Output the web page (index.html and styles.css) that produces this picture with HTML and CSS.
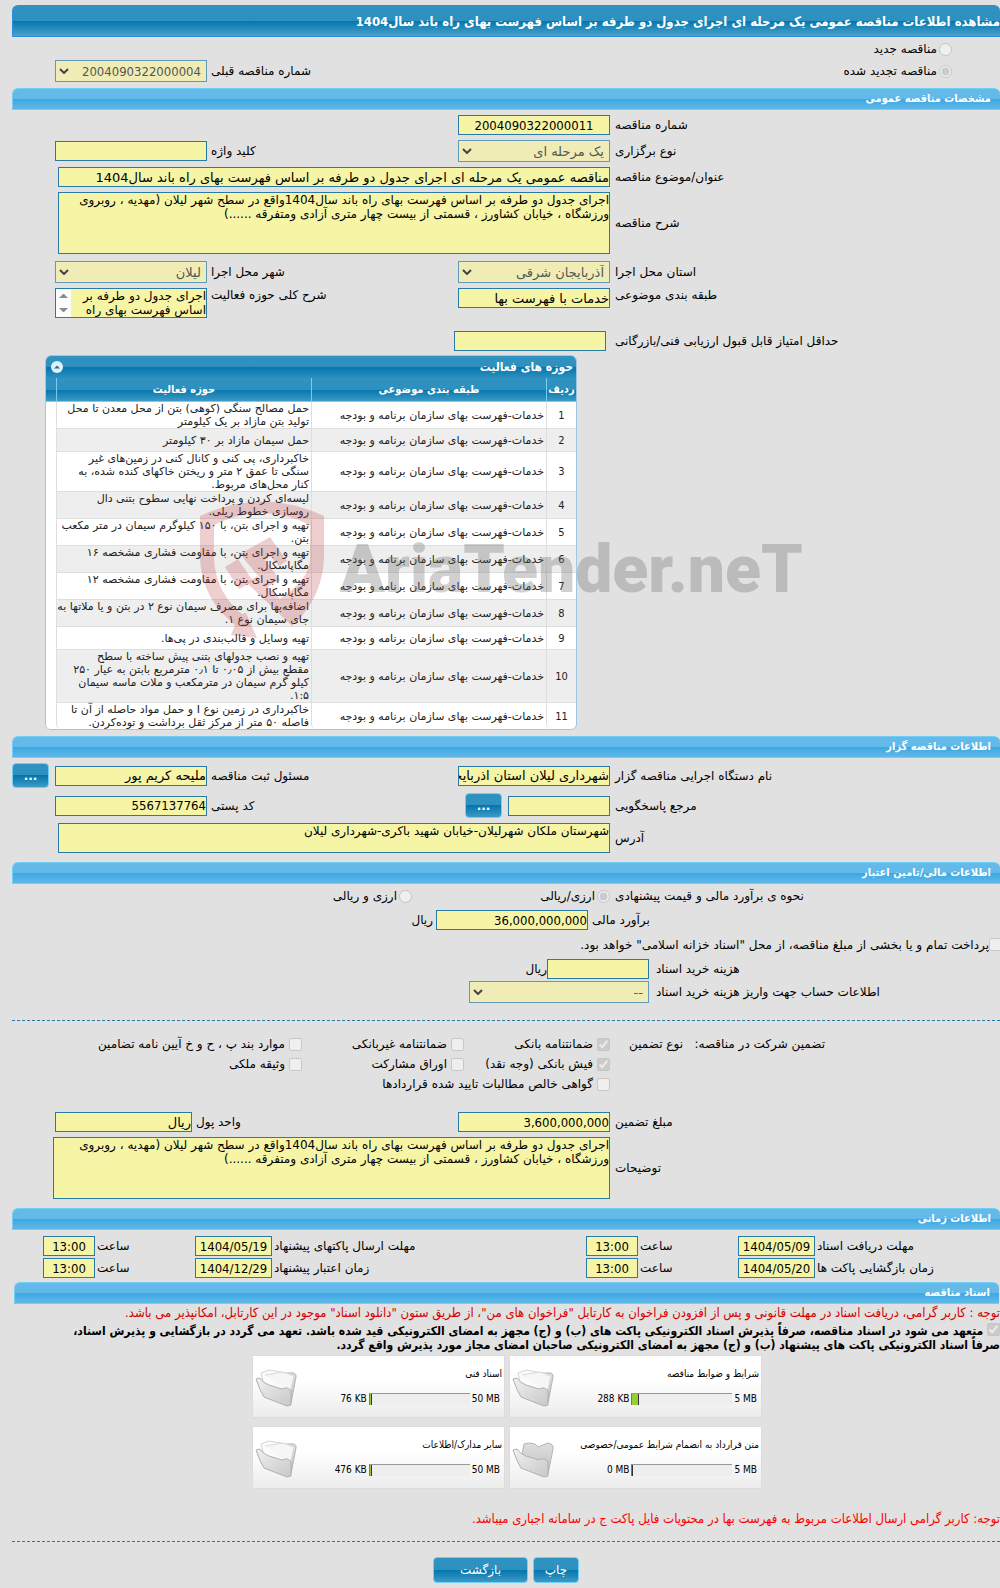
FILE: index.html
```html
<!DOCTYPE html>
<html lang="fa" dir="rtl">
<head>
    <meta charset="UTF-8">
    <meta name="viewport" content="width=device-width, initial-scale=1.0">
    <title>مشاهده اطلاعات مناقصه عمومی</title>
    <link rel="stylesheet" href="styles.css">
</head>
<body>
    <h1 class="page-title">مشاهده اطلاعات مناقصه عمومی یک مرحله ای اجرای جدول دو طرفه بر اساس فهرست بهای راه باند سال1404</h1>

    <form class="tender-form">
        <div class="row choice-row">
            <input type="radio" id="newTender" name="tenderKind" disabled>
            <label for="newTender">مناقصه جدید</label>
        </div>
        <div class="row choice-row">
            <input type="radio" id="renewedTender" name="tenderKind" checked disabled>
            <label for="renewedTender">مناقصه تجدید شده</label>
            <label class="label-second" for="previousNumber">شماره مناقصه قبلی</label>
            <select class="field field-end number" id="previousNumber" disabled><option>2004090322000004</option></select>
        </div>

        <h2 class="section-title">مشخصات مناقصه عمومی</h2>
        <div class="section">
            <div class="row">
                <label class="label-main" for="tenderNumber">شماره مناقصه</label>
                <input class="field number center" type="text" id="tenderNumber" value="2004090322000011" readonly>
            </div>
            <div class="row">
                <label class="label-main" for="tenderType">نوع برگزاری</label>
                <select class="field" id="tenderType" disabled><option>یک مرحله ای</option></select>
                <label class="label-second" for="keyword">کلید واژه</label>
                <input class="field field-end" type="text" id="keyword" readonly>
            </div>
            <div class="row">
                <label class="label-main" for="subject">عنوان/موضوع مناقصه</label>
                <input class="field wide" type="text" id="subject" value="مناقصه عمومی یک مرحله ای اجرای جدول دو طرفه بر اساس فهرست بهای راه باند سال1404" readonly>
            </div>
            <div class="row">
                <label class="label-main" for="description">شرح مناقصه</label>
                <textarea class="field wide tall" id="description" readonly>اجرای جدول دو طرفه بر اساس فهرست بهای راه باند سال1404واقع در سطح شهر لیلان (مهدیه ، روبروی
ورزشگاه ، خیابان کشاورز ، قسمتی از بیست چهار متری آزادی ومتفرقه ......)</textarea>
            </div>
            <div class="row place-row">
                <label class="label-main" for="province">استان محل اجرا</label>
                <select class="field" id="province" disabled><option>آذربایجان شرقی</option></select>
                <label class="label-second" for="city">شهر محل اجرا</label>
                <select class="field field-end" id="city" disabled><option>لیلان</option></select>
            </div>
            <div class="row top">
                <label class="label-main" for="category">طبقه بندی موضوعی</label>
                <input class="field" type="text" id="category" value="خدمات با فهرست بها" readonly>
                <label class="label-second" for="activitySummary">شرح کلی حوزه فعالیت</label>
                <textarea class="field field-end short scrolling" id="activitySummary" readonly>اجرای جدول دو طرفه بر
اساس فهرست بهای راه
باند سال1404</textarea>
                <span class="spinner"><svg viewBox="0 0 15 28" width="15" height="28"><path d="M3 9 L7 5 L8 5 L12 9Z M3 19 L7 23 L8 23 L12 19Z"/></svg></span>
            </div>
            <div class="row score-row">
                <label class="label-main" for="minScore">حداقل امتیاز قابل قبول ارزیابی فنی/بازرگانی</label>
                <input class="field" type="text" id="minScore" readonly>
            </div>
        </div>

        <div class="panel">
            <div class="panel-title">
                <span>حوزه های فعالیت</span>
                <button type="button" class="collapse" aria-label="بستن">
                    <svg viewBox="0 0 12 12" width="12" height="12"><circle cx="6" cy="6" r="6" fill="#dff0fa"/><path d="M3 7.5 L6 4.5 L9 7.5Z" fill="#1f6f9e"/></svg>
                </button>
            </div>
            <table class="activities">
                <thead>
                    <tr><th class="col-index">ردیف</th><th class="col-category">طبقه بندی موضوعی</th><th class="col-activity">حوزه فعالیت</th><th class="col-blank"></th></tr>
                </thead>
                <tbody>
                    <tr><td>1</td><td>خدمات-فهرست بهای سازمان برنامه و بودجه</td><td>حمل مصالح سنگی (کوهی) بتن از محل معدن تا محل<br>تولید بتن مازاد بر یک کیلومتر</td><td></td></tr>
                    <tr><td>2</td><td>خدمات-فهرست بهای سازمان برنامه و بودجه</td><td>حمل سیمان مازاد بر ۳۰ کیلومتر</td><td></td></tr>
                    <tr><td>3</td><td>خدمات-فهرست بهای سازمان برنامه و بودجه</td><td>خاکبرداری، پی کنی و کانال کنی در زمین‌های غیر<br>سنگی تا عمق ۲ متر و ریختن خاکهای کنده شده، به<br>کنار محل‌های مربوط.</td><td></td></tr>
                    <tr><td>4</td><td>خدمات-فهرست بهای سازمان برنامه و بودجه</td><td>لیسه‌ای کردن و پرداخت نهایی سطوح بتنی دال<br>روسازی خطوط ریلی.</td><td></td></tr>
                    <tr><td>5</td><td>خدمات-فهرست بهای سازمان برنامه و بودجه</td><td>تهیه و اجرای بتن، با ۱۵۰ کیلوگرم سیمان در متر مکعب<br>بتن.</td><td></td></tr>
                    <tr><td>6</td><td>خدمات-فهرست بهای سازمان برنامه و بودجه</td><td>تهیه و اجرای بتن، با مقاومت فشاری مشخصه ۱۶<br>مگاپاسکال.</td><td></td></tr>
                    <tr><td>7</td><td>خدمات-فهرست بهای سازمان برنامه و بودجه</td><td>تهیه و اجرای بتن، با مقاومت فشاری مشخصه ۱۲<br>مگاپاسکال.</td><td></td></tr>
                    <tr><td>8</td><td>خدمات-فهرست بهای سازمان برنامه و بودجه</td><td>اضافه‌بها برای مصرف سیمان نوع ۲ در بتن و یا ملاتها به<br>جای سیمان نوع ۱.</td><td></td></tr>
                    <tr><td>9</td><td>خدمات-فهرست بهای سازمان برنامه و بودجه</td><td>تهیه وسایل و قالب‌بندی در پی‌ها.</td><td></td></tr>
                    <tr><td>10</td><td>خدمات-فهرست بهای سازمان برنامه و بودجه</td><td>تهیه و نصب جدولهای بتنی پیش ساخته با سطح<br>مقطع بیش از ۰٫۰۵ تا ۰٫۱ مترمربع بابتن به عیار ۲۵۰<br>کیلو گرم سیمان در مترمکعب و ملات ماسه سیمان<br>۱:۵.</td><td></td></tr>
                    <tr><td>11</td><td>خدمات-فهرست بهای سازمان برنامه و بودجه</td><td>خاکبرداری در زمین نوع I و حمل مواد حاصله از آن تا<br>فاصله ۵۰ متر از مرکز ثقل برداشت و توده‌کردن.</td><td></td></tr>
                </tbody>
            </table>
            <div class="watermark" dir="ltr">
                <svg viewBox="0 0 124 137" width="124" height="137">
                    <path d="M0 15 Q62 -14 124 15 V58 Q122 98 92 125 L47 82 L57 75 L80 98 Q110 78 110 58 V24 Q62 0 14 24 V58 Q16 92 42 113 L46 112 L57 137 L31 134 L35 124 Q2 98 0 58Z"/>
                    <path d="M25 66 L38 58 L53 80 L39 88Z M40 53 L70 36 L87 60 L79 65 L70 55 L65 59 L80 79 L67 86Z"/>
                </svg>
                <span>AriaTender.neT</span>
            </div>
        </div>

        <h2 class="section-title">اطلاعات مناقصه گزار</h2>
        <div class="section">
            <div class="row">
                <label class="label-main" for="agency">نام دستگاه اجرایی مناقصه گزار</label>
                <input class="field" type="text" id="agency" value="شهرداری لیلان استان اذربایجان شرقی" readonly>
                <label class="label-second" for="registrar">مسئول ثبت مناقصه</label>
                <input class="field" type="text" id="registrar" value="ملیحه کریم پور" readonly>
                <button type="button" class="btn btn-more">...</button>
            </div>
            <div class="row">
                <label class="label-main" for="authority">مرجع پاسخگویی</label>
                <input class="field medium" type="text" id="authority" readonly>
                <button type="button" class="btn btn-more">...</button>
                <label class="label-second" for="postalCode">کد پستی</label>
                <input class="field field-end number" type="text" id="postalCode" value="5567137764" readonly>
            </div>
            <div class="row">
                <label class="label-main" for="address">آدرس</label>
                <textarea class="field wide short" id="address" readonly>شهرستان ملکان شهرلیلان-خیابان شهید باکری-شهرداری لیلان</textarea>
            </div>
        </div>

        <h2 class="section-title">اطلاعات مالی/تامین اعتبار</h2>
        <div class="row money-row">
            <span class="label-main">نحوه ی برآورد مالی و قیمت پیشنهادی</span>
            <div class="option option-first"><input type="radio" id="currencyOne" name="currency" checked disabled><label for="currencyOne">ارزی/ریالی</label></div>
            <div class="option"><input type="radio" id="currencyBoth" name="currency" disabled><label for="currencyBoth">ارزی و ریالی</label></div>
        </div>
        <div class="row">
            <label class="label-estimate" for="estimate">برآورد مالی</label>
            <input class="field number" type="text" id="estimate" value="36,000,000,000" readonly>
            <span class="unit">ریال</span>
        </div>
        <div class="row treasury-row">
            <input type="checkbox" id="treasury" disabled>
            <label for="treasury">پرداخت تمام و یا بخشی از مبلغ مناقصه، از محل "اسناد خزانه اسلامی" خواهد بود.</label>
        </div>
        <div class="row">
            <label class="label-cost" for="documentCost">هزینه خرید اسناد</label>
            <input class="field medium" type="text" id="documentCost" readonly>
            <span>ریال</span>
        </div>
        <div class="row account-row">
            <label class="label-cost" for="account">اطلاعات حساب جهت واریز هزینه خرید اسناد</label>
            <select class="field account" id="account" disabled><option>--</option></select>
        </div>

        <hr class="divider">

        <div class="guarantee">
            <span class="guarantee-title">تضمین شرکت در مناقصه:</span>
            <span class="guarantee-kind">نوع تضمین</span>
            <div class="guarantee-options">
                <div class="option"><input type="checkbox" id="g1" checked disabled><label for="g1">ضمانتنامه بانکی</label></div>
                <div class="option"><input type="checkbox" id="g2" disabled><label for="g2">ضمانتنامه غیربانکی</label></div>
                <div class="option"><input type="checkbox" id="g3" disabled><label for="g3">موارد بند پ ، ح و خ آیین نامه تضامین</label></div>
                <div class="option"><input type="checkbox" id="g4" checked disabled><label for="g4">فیش بانکی (وجه نقد)</label></div>
                <div class="option"><input type="checkbox" id="g5" disabled><label for="g5">اوراق مشارکت</label></div>
                <div class="option"><input type="checkbox" id="g6" disabled><label for="g6">وثیقه ملکی</label></div>
                <div class="option option-long"><input type="checkbox" id="g7" disabled><label for="g7">گواهی خالص مطالبات تایید شده قراردادها</label></div>
            </div>
        </div>

        <div class="section guarantee-amount">
            <div class="row">
                <label class="label-main" for="guaranteeAmount">مبلغ تضمین</label>
                <input class="field number" type="text" id="guaranteeAmount" value="3,600,000,000" readonly>
                <label class="label-second" for="currencyUnit">واحد پول</label>
                <input class="field field-end unit-field" type="text" id="currencyUnit" value="ریال" readonly>
            </div>
            <div class="row">
                <label class="label-main" for="notes">توضیحات</label>
                <textarea class="field wide tall notes" id="notes" readonly>اجرای جدول دو طرفه بر اساس فهرست بهای راه باند سال1404واقع در سطح شهر لیلان (مهدیه ، روبروی
ورزشگاه ، خیابان کشاورز ، قسمتی از بیست چهار متری آزادی ومتفرقه ......)</textarea>
            </div>
        </div>

        <h2 class="section-title">اطلاعات زمانی</h2>
        <div class="dates">
            <label for="receiveDate">مهلت دریافت اسناد</label>
            <input class="field number center" type="text" id="receiveDate" value="1404/05/09" readonly>
            <label for="receiveTime">ساعت</label>
            <input class="field number center" type="text" id="receiveTime" value="13:00" readonly>
            <label for="sendDate">مهلت ارسال پاکتهای پیشنهاد</label>
            <input class="field number center" type="text" id="sendDate" value="1404/05/19" readonly>
            <label for="sendTime">ساعت</label>
            <input class="field number center" type="text" id="sendTime" value="13:00" readonly>
            <label for="openDate">زمان بازگشایی پاکت ها</label>
            <input class="field number center" type="text" id="openDate" value="1404/05/20" readonly>
            <label for="openTime">ساعت</label>
            <input class="field number center" type="text" id="openTime" value="13:00" readonly>
            <label for="validDate">زمان اعتبار پیشنهاد</label>
            <input class="field number center" type="text" id="validDate" value="1404/12/29" readonly>
            <label for="validTime">ساعت</label>
            <input class="field number center" type="text" id="validTime" value="13:00" readonly>
        </div>

        <h2 class="section-title documents-title">اسناد مناقصه</h2>
        <p class="notice">توجه : کاربر گرامی، دریافت اسناد در مهلت قانونی و پس از افزودن فراخوان به کارتابل "فراخوان های من"، از طریق ستون "دانلود اسناد" موجود در این کارتابل، امکانپذیر می باشد.</p>
        <div class="commitment">
            <input type="checkbox" id="commitment" checked disabled>
            <label for="commitment">متعهد می شود در اسناد مناقصه، صرفاً پذیرش اسناد الکترونیکی پاکت های (ب) و (ج) مجهز به امضای الکترونیکی قید شده باشد. تعهد می گردد در بازگشایی و پذیرش اسناد،<br>صرفاً اسناد الکترونیکی پاکت های پیشنهاد (ب) و (ج) مجهز به امضای الکترونیکی صاحبان امضای مجاز مورد پذیرش واقع گردد.</label>
        </div>

        <svg class="defs" width="0" height="0" aria-hidden="true">
            <defs>
                <linearGradient id="front" x1="0" y1="0" x2="1" y2="1"><stop offset="0" stop-color="#f0f0f0"/><stop offset="1" stop-color="#c8c8c8"/></linearGradient>
                <linearGradient id="back" x1="0" y1="0" x2="0" y2="1"><stop offset="0" stop-color="#dedede"/><stop offset="1" stop-color="#c2c2c2"/></linearGradient>
                <symbol id="folder-empty" viewBox="0 0 42 38">
                    <path d="M10 14 L12 4 Q17 2 23 4 L26 7 L36 3 Q42 4 41 9 L36 34 L9 26Z" fill="url(#back)" stroke="#b5b5b5"/>
                    <path d="M1 10 L5 9 Q8 14 14 16 L27 20 Q33 17 36 22 L36 36 L32 37 L9 28 Q5 22 1 10Z" fill="url(#front)" stroke="#b0b0b0"/>
                </symbol>
                <symbol id="folder-full" viewBox="0 0 42 38">
                    <path d="M10 14 L12 5 L34 4 Q42 3 41 8 L36 34 L9 26Z" fill="url(#back)" stroke="#b5b5b5"/>
                    <path d="M6 4 L14 1 L36 5 L33 24 L10 20Z" fill="#fbfbfb" stroke="#d4d4d4"/>
                    <path d="M10 6 L28 3 L39 7 L35 24" fill="#f6f6f6" stroke="#d9d9d9"/>
                    <path d="M1 10 L5 9 Q8 14 14 16 L27 20 Q33 17 36 22 L36 36 L32 37 L9 28 Q5 22 1 10Z" fill="url(#front)" stroke="#b0b0b0"/>
                </symbol>
            </defs>
        </svg>
        <div class="files">
            <div class="file-card">
                <div class="file-info">
                    <a href="#">شرایط و ضوابط مناقصه</a>
                    <div class="usage"><span dir="ltr">5 MB</span><div class="track"><div class="used" style="width: 7%"></div></div><span dir="ltr">288 KB</span></div>
                </div>
                <svg class="folder"><use href="#folder-full"/></svg>
            </div>
            <div class="file-card">
                <div class="file-info">
                    <a href="#">اسناد فنی</a>
                    <div class="usage"><span dir="ltr">50 MB</span><div class="track"><div class="used" style="width: 2%"></div></div><span dir="ltr">76 KB</span></div>
                </div>
                <svg class="folder"><use href="#folder-full"/></svg>
            </div>
            <div class="file-card">
                <div class="file-info">
                    <a href="#">متن قرارداد به انضمام شرایط عمومی/خصوصی</a>
                    <div class="usage"><span dir="ltr">5 MB</span><div class="track"><div class="used" style="width: 0%"></div></div><span dir="ltr">0 MB</span></div>
                </div>
                <svg class="folder"><use href="#folder-empty"/></svg>
            </div>
            <div class="file-card">
                <div class="file-info">
                    <a href="#">سایر مدارک/اطلاعات</a>
                    <div class="usage"><span dir="ltr">50 MB</span><div class="track"><div class="used" style="width: 2%"></div></div><span dir="ltr">476 KB</span></div>
                </div>
                <svg class="folder"><use href="#folder-full"/></svg>
            </div>
        </div>

        <p class="notice notice-last">توجه: کاربر گرامی ارسال اطلاعات مربوط به فهرست بها در محتویات فایل پاکت ج در سامانه اجباری میباشد.</p>
        <hr class="divider">
        <div class="actions">
            <button type="button" class="btn">چاپ</button>
            <button type="button" class="btn btn-back">بازگشت</button>
        </div>
    </form>
</body>
</html>
```
FILE: styles.css
```css
* {
    box-sizing: border-box;
}
body {
    margin: 0;
    padding: 5px 0 5px 12px;
    background-color: #e1e1e1;
    color: #000;
    font-family: "DejaVu Sans", sans-serif;
    font-size: 12px;
    line-height: 14px;
    overflow-x: hidden;
}
input, select, textarea, button {
    font-family: inherit;
    margin: 0;
}
.page-title,
.section-title,
.panel-title,
.notice,
.commitment,
.files,
.number {
    font-family: "DejaVu Sans Condensed", "DejaVu Sans", sans-serif;
}
.page-title {
    margin: 0 0 1px;
    height: 32px;
    border: 1px solid #2a8fdb;
    border-radius: 6px 6px 0 0;
    border-right: none;
    background: linear-gradient(#2f92c0 0, #2d90bf 50%, #0376ae 50%, #4ba2ca 100%);
    color: #fff;
    font-size: 13px;
    line-height: 31px;
    white-space: nowrap;
}
.section-title {
    margin: 6px 0 0;
    padding: 0 9px;
    height: 22px;
    border: 1px solid #74cdf5;
    border-right: none;
    border-radius: 6px 6px 0 0;
    background: linear-gradient(#63bbea 0, #63b9e9 50%, #3aa8e2 50%, #60b8e8 100%);
    color: #fff;
    font-size: 11px;
    line-height: 20px;
}

/* form rows */
.section {
    display: flex;
    flex-direction: column;
    gap: 5px;
    padding: 5px 0 3px;
}
.row {
    display: flex;
    align-items: center;
    white-space: nowrap;
}
.row.top {
    position: relative;
    align-items: flex-start;
}
.choice-row {
    min-height: 22px;
    padding-right: 48px;
}
.choice-row input {
    margin-left: 2px;
}
.place-row {
    padding-top: 2px;
}
.label-main {
    flex: 0 0 390px;
    padding-left: 5px;
    text-align: left;
}
.label-second {
    flex: 1;
    padding-left: 4px;
    text-align: left;
}
.label-estimate {
    flex: 0 0 412px;
    padding-left: 4px;
    text-align: left;
}
.label-cost {
    flex: 0 0 351px;
    padding-left: 7px;
    text-align: left;
}
.field {
    width: 152px;
    height: 20px;
    padding: 0;
    border: 1px solid #2a7aa8;
    border-radius: 0;
    background-color: #f6f4a5;
    color: #000;
    font-size: 13px;
}
.center {
    text-align: center;
}
.medium {
    width: 102px;
}
.field-end {
    margin-left: 43px;
}
.wide {
    flex: 1;
    margin-left: 46px;
}
.notes {
    margin-left: 41px;
}
select.field {
    height: 22px;
    padding: 0 5px;
    appearance: none;
    border-color: #6199b8;
    background: #efedb5 url("data:image/svg+xml,%3Csvg xmlns='http://www.w3.org/2000/svg' width='10' height='6'%3E%3Cpath d='M1 1l4 4 4-4' fill='none' stroke='%23444' stroke-width='2'/%3E%3C/svg%3E") no-repeat 3px 7px;
    color: #555;
    opacity: 1;
}
textarea.field {
    display: block;
    font-size: 12px;
    line-height: 14px;
    resize: none;
    overflow: hidden;
}
.tall {
    min-height: 62px;
}
.short {
    min-height: 30px;
}
.spinner {
    position: absolute;
    top: 1px;
    left: 44px;
    background-color: #fcfcfc;
}
.spinner svg {
    display: block;
    fill: #8b8b8b;
}
.score-row {
    padding-top: 8px;
}
.score-row .field {
    margin-right: 4px;
}

/* buttons */
.btn {
    min-width: 46px;
    height: 26px;
    border: 1px solid #74cdf5;
    border-radius: 4px;
    background: linear-gradient(#2f92c0 0, #2d90bf 50%, #0376ae 50%, #3d9ac5 100%);
    color: #fff;
    font-size: 12px;
}
.btn-more {
    min-width: 37px;
    height: 25px;
    padding: 0;
    margin-right: 6px;
    font-weight: bold;
}
.btn-back {
    min-width: 95px;
}

/* activities */
.panel {
    position: relative;
    width: 532px;
    margin: 1px auto 0 33px;
    border: 1px solid #9fc6e3;
    border-radius: 6px;
    background-color: #fff;
}
.panel-title {
    display: flex;
    align-items: center;
    justify-content: space-between;
    height: 22px;
    padding: 0 3px 0 5px;
    border-radius: 5px 5px 0 0;
    background: linear-gradient(#2f92c0 0, #2d90bf 50%, #0376ae 50%, #2d90bf 100%);
    color: #fff;
    font-weight: bold;
}
.collapse {
    display: flex;
    padding: 0;
    border: none;
    background: none;
}
.activities {
    width: 100%;
    table-layout: fixed;
    border-collapse: separate;
    border-spacing: 0;
    font-size: 11px;
    line-height: 13px;
}
.activities th {
    height: 24px;
    padding: 0;
    border-left: 1px solid #74cdf5;
    border-bottom: 1px solid #74cdf5;
    background: linear-gradient(#2f92c0 0, #2d90bf 50%, #0376ae 50%, #3d9ac5 100%);
    color: #fff;
    font-family: "DejaVu Sans Condensed", "DejaVu Sans", sans-serif;
}
.activities td {
    height: 23px;
    padding: 0 2px;
    border-left: 1px solid #dedede;
    border-bottom: 1px solid #dedede;
    color: #222;
    white-space: nowrap;
}
.activities th:last-child,
.activities td:last-child {
    border-left: none;
}
.activities td:last-child {
    border-bottom: none;
    background-color: #fff;
}
.activities td:first-child {
    text-align: center;
    font-family: "DejaVu Sans Condensed", "DejaVu Sans", sans-serif;
}
.activities tr:nth-child(even) td:not(:last-child) {
    background-color: #eee;
}
.activities tr:last-child td {
    border-bottom: none;
    border-radius: 0 0 5px 5px;
}
.col-index {
    width: 30px;
}
.col-category {
    width: 235px;
}
.col-blank {
    width: 10px;
}
.watermark {
    position: absolute;
    top: 145px;
    left: 154px;
    display: flex;
    align-items: center;
    gap: 16px;
    color: rgba(100, 100, 100, 0.3);
    font-family: Roboto, sans-serif;
    font-size: 66px;
    font-weight: 900;
    line-height: 80px;
    white-space: nowrap;
    pointer-events: none;
}
.watermark svg {
    fill: rgba(190, 50, 55, 0.24);
}

/* financial rows */
.money-row {
    min-height: 24px;
    margin-bottom: 2px;
}
.option {
    display: flex;
    align-items: center;
    gap: 4px;
}
.money-row .option {
    gap: 2px;
}
.option-first {
    flex: 0 0 198px;
}
.unit {
    margin-right: 3px;
}
.treasury-row {
    min-height: 29px;
    margin-right: -2px;
}
.account-row {
    padding-top: 2px;
}
.account {
    width: 180px;
}
.divider {
    margin: 17px 0 0;
    border: none;
    border-top: 1px dashed #2a7aa8;
}
.guarantee {
    display: flex;
    padding: 13px 175px 0 0;
    line-height: 20px;
    white-space: nowrap;
}
.guarantee-title {
    flex: 0 0 142px;
}
.guarantee-kind {
    flex: 0 0 73px;
}
.guarantee-options {
    display: grid;
    grid-template-columns: 146px 162px auto;
    grid-auto-rows: 20px;
}
.option-long {
    grid-column: span 2;
}
.guarantee-amount {
    padding-top: 18px;
}
.unit-field {
    width: 137px;
}

/* dates */
.dates {
    display: grid;
    grid-template-columns: 185px 77px 100px 52px 1fr 77px 100px 52px;
    row-gap: 2px;
    align-items: center;
    padding: 6px 0 0 31px;
    white-space: nowrap;
}
.dates label {
    padding-left: 2px;
    text-align: left;
}
.dates .field {
    width: 100%;
}

/* documents */
.documents-title {
    margin: 4px 1px 0 2px;
}
.notice {
    margin: 2px 0 0;
    color: #d90000;
    font-size: 13px;
    white-space: nowrap;
}
.commitment {
    margin-top: 3px;
    font-weight: bold;
    white-space: nowrap;
}
.commitment input {
    vertical-align: -1px;
}
.defs {
    display: block;
}
.files {
    display: grid;
    grid-template-columns: 253px 253px;
    gap: 8px 4px;
    margin: 3px 238px 0 0;
}
.file-card {
    display: flex;
    justify-content: space-between;
    height: 63px;
    padding: 0 2px;
    border: 1px solid #dcdcdc;
    background: linear-gradient(#fff 40%, #ececec);
    font-size: 10px;
}
.file-info {
    padding-top: 11px;
    white-space: nowrap;
}
.file-info a {
    color: #000;
    text-decoration: none;
}
.usage {
    display: flex;
    align-items: center;
    gap: 2px;
    margin-top: 11px;
    padding-right: 2px;
}
.track {
    width: 101px;
    height: 12px;
    border-top: 1px solid #999;
    border-left: 1px solid #777;
    background-color: #eee;
    direction: ltr;
}
.used {
    height: 11px;
    border-right: 1px solid #333;
    background-color: #9acd32;
}
.folder {
    width: 42px;
    height: 38px;
    margin-top: 13px;
    margin-right: -60px;
}
.notice-last {
    margin-top: 23px;
    color: #f00;
}
.notice-last + .divider {
    margin-top: 15px;
}
.actions {
    display: flex;
    justify-content: center;
    gap: 5px;
    padding-top: 15px;
}
```
